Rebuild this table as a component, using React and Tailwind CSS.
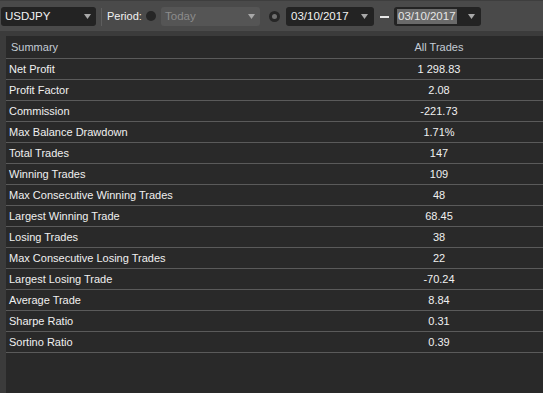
import React from "react";

const rows = [
  ["Net Profit", "1 298.83"],
  ["Profit Factor", "2.08"],
  ["Commission", "-221.73"],
  ["Max Balance Drawdown", "1.71%"],
  ["Total Trades", "147"],
  ["Winning Trades", "109"],
  ["Max Consecutive Winning Trades", "48"],
  ["Largest Winning Trade", "68.45"],
  ["Losing Trades", "38"],
  ["Max Consecutive Losing Trades", "22"],
  ["Largest Losing Trade", "-70.24"],
  ["Average Trade", "8.84"],
  ["Sharpe Ratio", "0.31"],
  ["Sortino Ratio", "0.39"],
];

function Arrow() {
  return (
    <svg width="7" height="5" viewBox="0 0 7 5" className="shrink-0">
      <polygon points="0,0 7,0 3.5,5" fill="#a8a8a8" />
    </svg>
  );
}

export default function App() {
  return (
    <div className="w-[543px] h-[393px] bg-[#3b3b3b] flex flex-col font-['Liberation_Sans',Arial,sans-serif] text-[11px] overflow-hidden">
      {/* toolbar */}
      <div className="h-[31px] bg-[#4a4a4a] border-t border-[#3e3e3e] flex items-start pt-[6px] pl-[1px] shrink-0 text-[11.5px]">
        <div className="w-[95px] h-[19px] bg-[#232323] rounded-[3px] flex items-center justify-between pl-[4px] pr-[5px] text-[#f2f2f2]">
          <span>USDJPY</span>
          <Arrow />
        </div>
        <div className="w-px h-[18px] mt-[1px] bg-[#5e5e5e] ml-[5px]" />
        <span className="ml-[5px] w-[33px] h-[19px] leading-[19px] text-[#f2f2f2] text-[11px]">Period:</span>
        <div className="ml-[6px] mt-[4px] w-[10px] h-[10px] rounded-full bg-[#262626]" />
        <div className="ml-[5px] w-[99px] h-[19px] bg-[#555555] rounded-[3px] flex items-center justify-between pl-[4px] pr-[5px] text-[#8c8c8c]">
          <span>Today</span>
          <Arrow />
        </div>
        <div className="ml-[9px] mt-[4px] w-[11px] h-[11px] rounded-full bg-[#262626] flex items-center justify-center">
          <div className="w-[5px] h-[5px] rounded-full bg-[#707070]" />
        </div>
        <div className="ml-[6px] w-[88px] h-[19px] bg-[#232323] rounded-[3px] flex items-center justify-between pl-[5px] pr-[6px] text-[#f2f2f2]">
          <span>03/10/2017</span>
          <Arrow />
        </div>
        <div className="ml-[6px] mt-[9px] w-[9px] h-[2px] bg-[#e8e8e8]" />
        <div className="ml-[5px] w-[87px] h-[19px] bg-[#232323] rounded-[3px] flex items-center justify-between pl-[3px] pr-[6px]">
          <span className="bg-[#6a6a6a] text-[#e6e6e6] px-[1px] leading-[15px]">03/10/2017</span>
          <Arrow />
        </div>
      </div>
      {/* body */}
      <div className="flex-1 flex pt-[5px]">
        <div className="w-[6px] shrink-0" />
        <div className="flex-1 bg-[#292929]">
          <div className="grid grid-cols-[329px_1fr] h-[23px] pt-[1px] border-b border-[#5a5a5a] text-[#c4ccd6] items-center">
            <span className="pl-[5px]">Summary</span>
            <span className="text-center">All Trades</span>
          </div>
          {rows.map(([label, value]) => (
            <div
              key={label}
              className="grid grid-cols-[329px_1fr] h-[21px] pt-[1px] border-b border-[#5a5a5a] text-[#f0f0f0] items-center"
            >
              <span className="pl-[3px]">{label}</span>
              <span className="text-center">{value}</span>
            </div>
          ))}
        </div>
      </div>
    </div>
  );
}
